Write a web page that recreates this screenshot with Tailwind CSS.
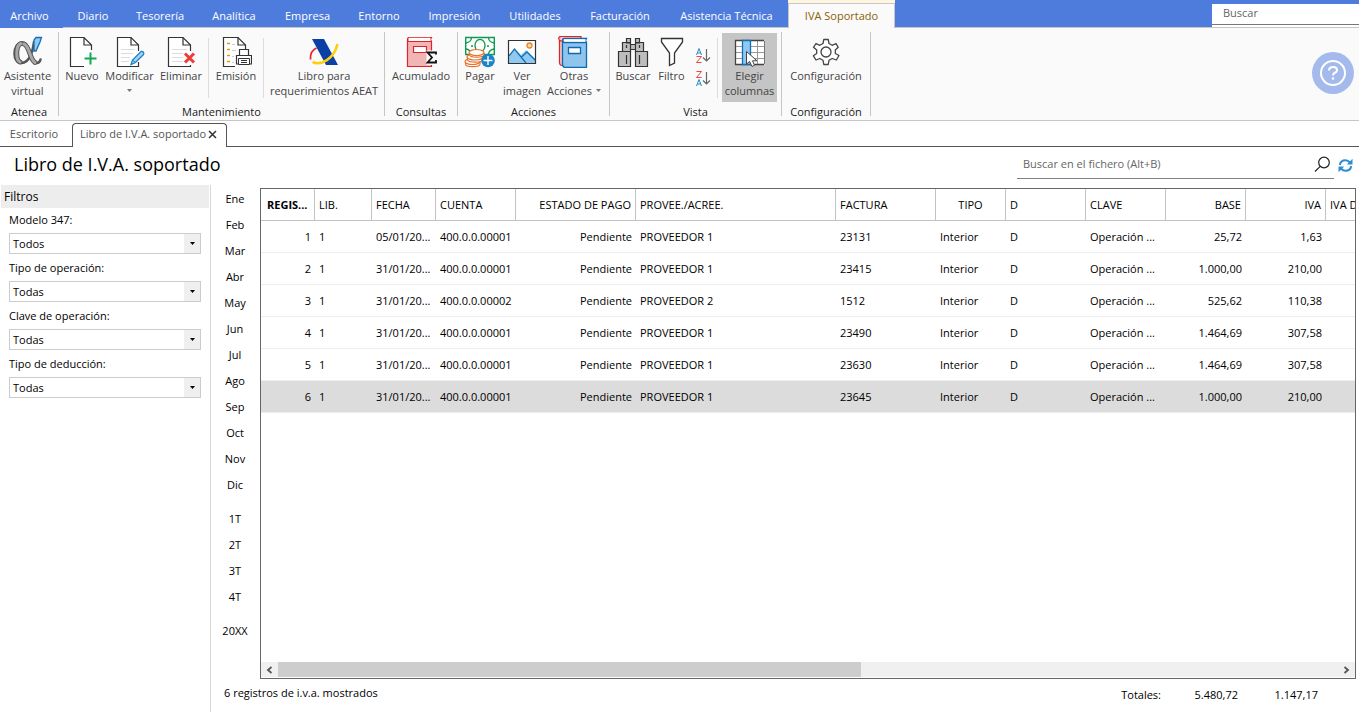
<!DOCTYPE html>
<html lang="es">
<head>
<meta charset="utf-8">
<meta name="viewport" content="width=device-width, initial-scale=1">
<title>Libro de I.V.A. soportado</title>
<script src="https://cdn.jsdelivr.net/npm/@tailwindcss/browser@4"></script>
</head>
<body class="flex h-screen min-w-[900px] flex-col overflow-hidden bg-white font-['Open_Sans','Noto_Sans',sans-serif] text-[11px] leading-4 text-black">

<!-- Menu tabs -->
<header class="flex h-7 shrink-0 items-stretch justify-between border-b border-[#c6c6c6] bg-[#4e7cdc] text-white">
  <nav class="flex [&>button]:shrink-0 [&>button]:pt-1">
    <button class="-mb-px w-[63px] bg-[#4e7cdc] pr-1">Archivo</button>
    <button class="w-[60px]">Diario</button>
    <button class="w-[74px]">Tesorería</button>
    <button class="w-[74px]">Analítica</button>
    <button class="w-[73px]">Empresa</button>
    <button class="w-[70px]">Entorno</button>
    <button class="w-[81px]">Impresión</button>
    <button class="w-[80px]">Utilidades</button>
    <button class="w-[90px]">Facturación</button>
    <button class="w-[123px]">Asistencia Técnica</button>
    <div class="-mb-px flex w-[107px] flex-col bg-[#fff6e0] pt-[3px]">
      <button class="flex-1 border-x border-t border-[#c6c6c6] bg-[#fafafa] text-[#8a6207]">IVA Soportado</button>
    </div>
  </nav>
  <div class="w-[147px] bg-[#4e7cdc] pt-1">
    <div class="h-[23px] bg-white">
      <input type="text" aria-label="Buscar" placeholder="Buscar" class="block h-[21px] w-full border-b border-[#777] bg-white px-[11px] pb-[3px] text-[11px] text-[#555] outline-none placeholder:text-[#666]">
    </div>
  </div>
</header>

<!-- Ribbon -->
<section class="flex h-[93px] shrink-0 items-start border-b border-[#c6c6c6] bg-[#fafafa] text-[#444] [&_button]:flex [&_button]:shrink-0 [&_button]:flex-col [&_button]:items-center [&_button]:whitespace-nowrap [&_button]:leading-[15px] [&_h2]:mt-[2px] [&_h2]:text-center [&_h2]:text-[#1a1a1a] [&_svg]:shrink-0">
  <div class="w-[58px] pt-[5px]">
    <button class="h-[69px] w-[55px] pt-[3px]">
      <svg width="32" height="32" viewBox="0 0 32 32" fill="none" stroke-linecap="round"><path d="M22 6C21 15 17.500 27 9.500 27C4.500 27 2.500 22.500 2.500 17.500C2.500 11.500 5.500 6.500 10.500 6.500C18.500 6.500 18 27 25 27C27 27 28 25.500 28.500 23.500" stroke="#555" stroke-width="2.500"/><path d="M8 26C3.500 24 3.500 9.500 9 7.500M12 8C17.500 10 18 24 23 26.500" stroke="#555" stroke-width="5"/><path d="M8 26C3.500 24 3.500 9.500 9 7.500M12 8C17.500 10 18 24 23 26.500" stroke="#a8a8a8" stroke-width="3"/><path d="M22 15V4L24 1.500H29.500L28 6L24 15Z" fill="#8fc9f2" stroke="#1271b5" stroke-width="1.300"/></svg>
      <span>Asistente</span><span>virtual</span>
    </button>
    <h2>Atenea</h2>
  </div>
  <div class="mt-1 h-[84px] w-px bg-[#c6c6c6]"></div>

  <div class="w-[325px] pt-[5px]">
    <div class="flex pl-[3px]">
      <button class="h-[69px] w-10 pt-[3px]">
        <svg width="32" height="32" viewBox="0 0 32 32"><path d="M4.500 1.500H18L25.500 9V18L20 30.500H4.500Z" fill="#fff"/><path d="M18 30.500H4.500V1.500H18L25.500 9V14M18 1.500V9H25.500" fill="none" stroke="#333" stroke-width="1.200"/><path d="M24.500 16.500V28.500M18.500 22.500H30.500" stroke="#0fa958" stroke-width="2"/></svg>
        <span>Nuevo</span>
      </button>
      <button class="h-[69px] w-[55px] pt-[3px]">
        <svg width="32" height="32" viewBox="0 0 32 32"><path d="M24.500 15V9L17 1.500H3.500V30.500H24.500V26" fill="#fff" stroke="#333" stroke-width="1.200"/><path d="M17 1.500V9H24.500" fill="none" stroke="#333" stroke-width="1.200"/><path d="M7 13.500H21M7 17.500H19M7 21.500H16M7 25.500H15" stroke="#ddd"/><path d="M17 28.500L18.500 24L27 15.500C29 15 30.500 17 29.500 18.500L21.500 26.500Z" fill="#a5d4f4" stroke="#1c80c7" stroke-width="1.300"/><path d="M19 24.500L21.500 26.500" stroke="#1c80c7"/></svg>
        <span>Modificar</span>
        <svg class="mt-[6px]" width="5" height="4" viewBox="0 0 5 4"><path d="M0 0H5L2.500 3Z" fill="#777"/></svg>
      </button>
      <button class="h-[69px] w-12 pt-[3px]">
        <svg width="32" height="32" viewBox="0 0 32 32"><path d="M25.500 15V9L18 1.500H3.500V30.500H25.500V29" fill="#fff" stroke="#333" stroke-width="1.200"/><path d="M18 1.500V9H25.500" fill="none" stroke="#333" stroke-width="1.200"/><path d="M7 13.500H22M7 17.500H18M7 21.500H18M7 25.500H18" stroke="#ddd"/><path d="M20 17.500L29 26.500M29 17.500L20 26.500" stroke="#ef3b36" stroke-width="3"/></svg>
        <span>Eliminar</span>
      </button>
      <div class="ml-[3px] mt-[5px] h-[60px] w-px bg-[#dcdcdc]"></div>
      <button class="ml-[3px] h-[69px] w-12 pt-[3px]">
        <svg width="32" height="32" viewBox="0 0 32 32"><path d="M15 30.500H3.500V1.500H18L25.500 9V13" fill="#fff" stroke="#333" stroke-width="1.200"/><path d="M18 1.500V9H25.500" fill="none" stroke="#333" stroke-width="1.200"/><path d="M7 7.500H10M7 13.500H10M7 19.500H10M7 25.500H10" stroke="#e8960c" stroke-width="1.500"/><path d="M12 8.500H15M12 14.500H16M12 20.500H14M12 26.500H14" stroke="#ccc"/><path d="M19.500 19V13.500H28.500V19M18.500 28H16.500V19.500H31.500V28H29.500" fill="#fff" stroke="#333" stroke-width="1.200"/><path d="M18.500 22.500H29.500V28.500H18.500ZM21 24.500H27M21 26.500H27" fill="#fff" stroke="#333"/></svg>
        <span>Emisión</span>
      </button>
      <div class="ml-[3px] mt-[5px] h-[60px] w-px bg-[#dcdcdc]"></div>
      <button class="ml-[3px] h-[69px] w-[114px] pt-[3px]">
        <svg width="32" height="32" viewBox="0 0 32 32"><path d="M4 3H16L30 29H18Z" fill="#0a3fa6"/><path d="M2.500 23.500C2 18 4 14 8.500 12" fill="none" stroke="#e8222a" stroke-width="1.800"/><path d="M4.500 26C13 30 26 23 29.500 8" fill="none" stroke="#ffd008" stroke-width="2.600"/></svg>
        <span>Libro para</span><span>requerimientos AEAT</span>
      </button>
    </div>
    <h2>Mantenimiento</h2>
  </div>
  <div class="mt-1 h-[84px] w-px bg-[#c6c6c6]"></div>

  <div class="w-[72px] pt-[5px]">
    <button class="h-[69px] w-full pt-[3px]">
      <svg width="32" height="32" viewBox="0 0 32 32"><path d="M2.500 4V30.500H26.500V5.500H4Q2.500 5.500 2.500 3.500Q2.500 1.500 4 1.500H26.500L25.500 3.500L26.500 5.500" fill="#f2b5b5" stroke="#e32129" stroke-width="1.200"/><path d="M4 1.800H25.500V5H4Z" fill="#fff"/><path d="M8.500 10.500H21.500V16.500H8.500Z" fill="#fff" stroke="#e32129" stroke-width="1.200"/><path d="M21.500 14.500H32V29H21.500Z" fill="#fafafa"/><path d="M31 18.500V16.500H22.500L27 21.500L22.500 26.500H31V24" fill="none" stroke="#111" stroke-width="1.800"/></svg>
      <span>Acumulado</span>
    </button>
    <h2>Consultas</h2>
  </div>
  <div class="mt-1 h-[84px] w-px bg-[#c6c6c6]"></div>

  <div class="w-[151px] pt-[5px]">
    <div class="flex pl-px">
      <button class="h-[69px] w-[42px] pt-[3px]">
        <svg width="32" height="32" viewBox="0 0 32 32"><path d="M1.700 1.500H30.300V18.500H1.700Z" fill="#fff" stroke="#0d9a50" stroke-width="1.400"/><path d="M2 7Q7 6 7.500 2M30 7Q25 6 24.500 2M30 13Q25 14 24.500 18M2 13Q4 13 6 15" fill="none" stroke="#0d9a50" stroke-width="1.300"/><ellipse cx="16" cy="9.500" rx="5" ry="6.200" fill="#fff" stroke="#0d9a50" stroke-width="1.300"/><circle cx="8" cy="10" r="1" fill="#0d9a50"/><circle cx="24" cy="10" r="1" fill="#0d9a50"/><g fill="#fff" stroke="#e8742c" stroke-width="1.200"><path d="M1.500 26V28C1.500 31.500 16 31.500 16 28V26"/><ellipse cx="8.500" cy="25.500" rx="7.500" ry="3"/><path d="M3.500 21.500V23.500C3.500 27 19 27 19 23.500V21.500"/><ellipse cx="11" cy="21" rx="8" ry="3"/><path d="M5.500 16.500V18.500C5.500 22 20 22 20 18.500V16.500"/><ellipse cx="12.500" cy="16.500" rx="7.500" ry="3"/></g><circle cx="24" cy="24.500" r="6.800" fill="#1b83c9"/><path d="M24 20V29M19.500 24.500H28.500" stroke="#fff" stroke-width="1.400"/></svg>
        <span>Pagar</span>
      </button>
      <button class="h-[69px] w-[42px] pt-[3px]">
        <svg width="32" height="32" viewBox="0 0 32 32"><path d="M2.500 4.500H29.500V27.500H2.500Z" fill="#fff"/><path d="M3 21L9 13L15 19L20 14L29 22.500V27H3Z" fill="#8fc9f2"/><path d="M3 20L8.500 13L20 27M15.500 21L21 16L29 24" fill="none" stroke="#1271b5" stroke-width="1.300"/><circle cx="23.500" cy="9.500" r="2.500" fill="#f8d9a2" stroke="#e8842c" stroke-width="1.300"/><path d="M2.500 4.500H29.500V27.500H2.500Z" fill="none" stroke="#333" stroke-width="1.200"/></svg>
        <span>Ver</span><span>imagen</span>
      </button>
      <button class="h-[69px] w-[62px] pt-[3px]">
        <svg width="32" height="32" viewBox="0 0 32 32"><path d="M1.500 4V26Q1.500 29.500 4 29.500H7V6H23V.500H3Q.700 .500 .700 2.500Q.700 4.500 3 5H7" fill="#f6c2c2" stroke="#e32129" stroke-width="1.200"/><path d="M4.500 4.500V28Q4.500 31.300 7 31.300H28.500V6.500H6.500Q4.500 6.500 4.500 4.500Q4.500 2.500 6.500 2.500H28.500L27.500 4.500L28.500 6.500" fill="#8fc5ec" stroke="#0f69b0" stroke-width="1.300"/><path d="M6 3.200H27.500V5.800H6Z" fill="#fff"/><path d="M10.500 11.500H22.500V17.500H10.500Z" fill="#fff" stroke="#0f69b0" stroke-width="1.300"/></svg>
        <span>Otras</span>
        <span class="flex items-center gap-1">Acciones<svg width="5" height="4" viewBox="0 0 5 4"><path d="M0 0H5L2.500 3Z" fill="#777"/></svg></span>
      </button>
    </div>
    <h2>Acciones</h2>
  </div>
  <div class="mt-1 h-[84px] w-px bg-[#c6c6c6]"></div>

  <div class="w-[171px] pt-[5px]">
    <div class="flex pl-[2px]">
      <button class="h-[69px] w-[42px] pt-[3px]">
        <svg width="32" height="32" viewBox="0 0 32 32"><g fill="#bdbdbd" stroke="#333" stroke-width="1.200"><path d="M9.500 2.500H13.500V7H9.500ZM18.500 2.500H22.500V7H18.500ZM5.500 6.500H13.500V15.500H5.500ZM18.500 6.500H26.500V15.500H18.500ZM13.500 8.500H18.500V13.500H13.500Z"/><path d="M1.500 15.500H13.500V30.500H1.500ZM18.500 15.500H30.500V30.500H18.500Z"/><path d="M9.500 19V28M22.500 19V28M9.500 9V12M22.500 9V12"/></g></svg>
        <span>Buscar</span>
      </button>
      <button class="h-[69px] w-[35px] pt-[3px]">
        <svg width="32" height="32" viewBox="0 0 32 32"><path d="M5.500 2.500H26.500V6L18.500 17V27L13.500 29.500V17L5.500 6Z" fill="#fff" stroke="#333" stroke-width="1.300"/></svg>
        <span>Filtro</span>
      </button>
      <div class="flex w-[28px] flex-col items-center gap-[6px] pt-[14px]">
        <button aria-label="Orden ascendente"><svg width="16" height="17" viewBox="0 0 16 17" fill="none"><path d="M1.500 8L4 1.500L6.500 8M2.500 6H5.500" stroke="#258acb"/><path d="M1.500 9.500H6.500L1.500 15.500H6.500" stroke="#ed4545"/><path d="M11.500 2V14M8 10.500L11.500 14L15 10.500" stroke="#666" stroke-width="1.200"/></svg></button>
        <button aria-label="Orden descendente"><svg width="16" height="17" viewBox="0 0 16 17" fill="none"><path d="M1.500 1.500H6.500L1.500 7.500H6.500" stroke="#ed4545"/><path d="M1.500 16L4 9.500L6.500 16M2.500 14H5.500" stroke="#258acb"/><path d="M11.500 2V14M8 10.500L11.500 14L15 10.500" stroke="#666" stroke-width="1.200"/></svg></button>
      </div>
      <div class="mt-[5px] h-[60px] w-px bg-[#dcdcdc]"></div>
      <button aria-pressed="true" class="ml-1 h-[69px] w-[55px] bg-[#c5c5c5] pt-[3px]">
        <svg width="32" height="32" viewBox="0 0 32 32"><path d="M1.500 4.500H30.500V28.500H1.500Z" fill="#fff"/><path d="M1.500 10.500H30.500M1.500 16.500H30.500M1.500 22.500H30.500M16.500 5V28M23.500 5V28" stroke="#999"/><path d="M30.500 5V28" stroke="#777"/><path d="M30 4.500H1.500V28.500H30" fill="none" stroke="#444" stroke-width="1.300"/><path d="M8.500 4.500H16.500V28.500H8.500Z" fill="#8fc9f2" stroke="#1271b5" stroke-width="1.300"/><path d="M12.500 15.500V28L15.500 25.500L18 30.500L20.500 29.200L18.500 24.800H23Z" fill="#fff" stroke="#444"/></svg>
        <span>Elegir</span><span>columnas</span>
      </button>
    </div>
    <h2>Vista</h2>
  </div>
  <div class="mt-1 h-[84px] w-px bg-[#c6c6c6]"></div>

  <div class="w-[88px] pt-[5px]">
    <button class="h-[69px] w-full pt-[3px]">
      <svg width="32" height="32" viewBox="0 0 32 32"><path d="M13 7.500L13.800 3.500H18.200L19 7.500L22.200 9.300L26 7.500L28.200 11.300L25.300 14L25.300 17.500L29 19.500L26.300 24L22.200 22.500L19 24.300L18.200 28.500H13.800L13 24.300L9.800 22.500L6 24L3.400 19.800L6.700 17.500V14L3.500 11.300L6 7.500L9.800 9.300Z" fill="#fff" stroke="#444" stroke-width="1.300" stroke-linejoin="round"/><circle cx="16" cy="16" r="5" fill="#fff" stroke="#444" stroke-width="1.300"/></svg>
      <span>Configuración</span>
    </button>
    <h2>Configuración</h2>
  </div>
  <div class="mt-1 h-[84px] w-px bg-[#c6c6c6]"></div>

  <button aria-label="Ayuda" class="ml-auto mr-[5px] mt-6">
    <svg width="42" height="42" viewBox="0 0 42 42"><circle cx="21" cy="21" r="21" fill="#a4baec"/><circle cx="21" cy="21" r="12" fill="none" stroke="#fff" stroke-width="2"/><path d="M17 18.500Q17 15 21 15Q25 15 25 18Q25 20 22.500 21Q21 21.800 21 23.500" fill="none" stroke="#fff" stroke-width="2"/><circle cx="21" cy="26.500" r="1.300" fill="#fff"/></svg>
  </button>
</section>

<!-- Document tabs -->
<nav class="flex h-[26px] shrink-0 items-stretch text-[#555]">
  <button class="w-[72px] border-b border-[#555] pr-1">Escritorio</button>
  <div class="mt-[2px] flex w-[155px] shrink-0 items-center justify-between rounded-t-[4px] border-x border-t border-[#555] pb-[3px] pl-[7px] pr-[9px] whitespace-nowrap">
    <button>Libro de I.V.A. soportado</button>
    <button aria-label="Cerrar"><svg width="9" height="9" viewBox="0 0 9 9"><path d="M1 1L8 8M8 1L1 8" stroke="#333" stroke-width="1.500"/></svg></button>
  </div>
  <div class="flex-1 border-b border-[#555]"></div>
</nav>

<!-- Title and file search -->
<div class="flex h-[38px] shrink-0 items-start justify-between pl-[14px] pr-[6px]">
  <h1 class="pt-[5px] text-[18px] leading-6">Libro de I.V.A. soportado</h1>
  <div class="flex items-center gap-[4px]">
    <div class="flex h-8 w-[317px] items-center border-b border-[#808080] pl-[6px] pr-[3px]">
      <input type="text" aria-label="Buscar en el fichero" placeholder="Buscar en el fichero (Alt+B)" class="min-w-0 flex-1 pt-[3px] text-[11px] outline-none placeholder:text-[#666]">
      <button aria-label="Buscar" class="pt-[3px]"><svg width="17" height="17" viewBox="0 0 17 17"><circle cx="10" cy="6.500" r="5.300" fill="none" stroke="#222" stroke-width="1.200"/><path d="M6.200 10.300L1 15.500" stroke="#222" stroke-width="1.200"/></svg></button>
    </div>
    <button aria-label="Actualizar" class="pt-1"><svg width="15" height="15" viewBox="0 0 15 15"><path d="M1.800 7Q2.500 2.200 7.500 2.200Q10 2.200 12 4.500M13.200 8Q12.500 12.800 7.500 12.800Q5 12.800 3 10.500" fill="none" stroke="#2e8dcf" stroke-width="2"/><path d="M14.500 .800V6.500H8.800ZM.500 14.200V8.500H6.200Z" fill="#2e8dcf"/></svg></button>
  </div>
</div>

<main class="flex min-h-0 flex-1">
  <!-- Filters -->
  <aside class="w-[211px] shrink-0 border-r border-[#d8d8d8] pl-px pr-px">
    <h2 class="h-[23px] bg-[#ededed] pl-[3px] text-[12px] leading-6">Filtros</h2>
    <form class="flex flex-col gap-[6px] py-1 pl-2 pr-2 [&_label]:mb-[5px] [&_label]:block [&_select]:h-[21px] [&_select]:w-full [&_select]:appearance-none [&_select]:border [&_select]:border-[#ccc] [&_select]:bg-white [&_select]:px-[3px] [&_select]:text-[11px] [&_span]:pointer-events-none [&_span]:absolute [&_span]:inset-y-px [&_span]:right-px [&_span]:flex [&_span]:w-4 [&_span]:items-center [&_span]:justify-center [&_span]:bg-[#efefef]">
      <div><label for="f1">Modelo 347:</label><div class="relative"><select id="f1"><option>Todos</option></select><span><svg width="5" height="3" viewBox="0 0 5 3"><path d="M0 0H5L2.500 3Z"/></svg></span></div></div>
      <div><label for="f2">Tipo de operación:</label><div class="relative"><select id="f2"><option>Todas</option></select><span><svg width="5" height="3" viewBox="0 0 5 3"><path d="M0 0H5L2.500 3Z"/></svg></span></div></div>
      <div><label for="f3">Clave de operación:</label><div class="relative"><select id="f3"><option>Todas</option></select><span><svg width="5" height="3" viewBox="0 0 5 3"><path d="M0 0H5L2.500 3Z"/></svg></span></div></div>
      <div><label for="f4">Tipo de deducción:</label><div class="relative"><select id="f4"><option>Todas</option></select><span><svg width="5" height="3" viewBox="0 0 5 3"><path d="M0 0H5L2.500 3Z"/></svg></span></div></div>
    </form>
  </aside>

  <div class="flex min-w-0 flex-1 flex-col pr-[3px] pt-[3px]">
    <div class="flex min-h-0 flex-1">
      <!-- Periods -->
      <nav class="-mt-[2px] flex w-[49px] shrink-0 flex-col pr-px [&>button]:h-[26px]">
        <button>Ene</button><button>Feb</button><button>Mar</button><button>Abr</button><button>May</button><button>Jun</button><button>Jul</button><button>Ago</button><button>Sep</button><button>Oct</button><button>Nov</button><button>Dic</button>
        <button class="mt-2">1T</button><button>2T</button><button>3T</button><button>4T</button>
        <button class="mt-2">20XX</button>
      </nav>
      <!-- Records -->
      <div class="flex min-w-0 flex-1 flex-col border border-[#666]">
        <div class="min-h-0 flex-1 overflow-hidden">
          <table class="w-[1145px] min-w-full table-fixed border-separate border-spacing-0 [&_td]:h-8 [&_td]:overflow-hidden [&_td]:border-b [&_td]:border-[#eee] [&_td]:px-1 [&_td]:text-ellipsis [&_td]:whitespace-nowrap [&_th]:h-8 [&_th]:overflow-hidden [&_th]:border-r [&_th]:border-b [&_th]:border-[#c3c3c3] [&_th]:px-1 [&_th]:text-left [&_th]:font-normal [&_th]:text-ellipsis [&_th]:whitespace-nowrap">
            <colgroup><col class="w-[54px]"><col class="w-[57px]"><col class="w-[64px]"><col class="w-[80px]"><col class="w-[120px]"><col class="w-[200px]"><col class="w-[100px]"><col class="w-[70px]"><col class="w-[80px]"><col class="w-[80px]"><col class="w-[80px]"><col class="w-[80px]"><col></colgroup>
            <thead>
              <tr><th class="pl-[6px]!"><b>REGIS...</b></th><th>LIB.</th><th>FECHA</th><th>CUENTA</th><th class="text-right!">ESTADO DE PAGO</th><th>PROVEE./ACREE.</th><th>FACTURA</th><th class="text-center!">TIPO</th><th>D</th><th>CLAVE</th><th class="text-right!">BASE</th><th class="text-right!">IVA</th><th>IVA DED.</th></tr>
            </thead>
            <tbody>
              <tr><td class="text-right">1</td><td>1</td><td>05/01/20...</td><td>400.0.0.00001</td><td class="text-right">Pendiente</td><td>PROVEEDOR 1</td><td>23131</td><td>Interior</td><td>D</td><td>Operación ...</td><td class="text-right">25,72</td><td class="text-right">1,63</td><td></td></tr>
              <tr><td class="text-right">2</td><td>1</td><td>31/01/20...</td><td>400.0.0.00001</td><td class="text-right">Pendiente</td><td>PROVEEDOR 1</td><td>23415</td><td>Interior</td><td>D</td><td>Operación ...</td><td class="text-right">1.000,00</td><td class="text-right">210,00</td><td></td></tr>
              <tr><td class="text-right">3</td><td>1</td><td>31/01/20...</td><td>400.0.0.00002</td><td class="text-right">Pendiente</td><td>PROVEEDOR 2</td><td>1512</td><td>Interior</td><td>D</td><td>Operación ...</td><td class="text-right">525,62</td><td class="text-right">110,38</td><td></td></tr>
              <tr><td class="text-right">4</td><td>1</td><td>31/01/20...</td><td>400.0.0.00001</td><td class="text-right">Pendiente</td><td>PROVEEDOR 1</td><td>23490</td><td>Interior</td><td>D</td><td>Operación ...</td><td class="text-right">1.464,69</td><td class="text-right">307,58</td><td></td></tr>
              <tr><td class="text-right">5</td><td>1</td><td>31/01/20...</td><td>400.0.0.00001</td><td class="text-right">Pendiente</td><td>PROVEEDOR 1</td><td>23630</td><td>Interior</td><td>D</td><td>Operación ...</td><td class="text-right">1.464,69</td><td class="text-right">307,58</td><td></td></tr>
              <tr class="bg-[#dcdcdc]"><td class="text-right">6</td><td>1</td><td>31/01/20...</td><td>400.0.0.00001</td><td class="text-right">Pendiente</td><td>PROVEEDOR 1</td><td>23645</td><td>Interior</td><td>D</td><td>Operación ...</td><td class="text-right">1.000,00</td><td class="text-right">210,00</td><td></td></tr>
            </tbody>
          </table>
        </div>
        <div class="mb-px flex h-[15px] shrink-0 bg-[#f0f0f0] [&>button]:flex [&>button]:w-[17px] [&>button]:items-center [&>button]:justify-center">
          <button aria-label="Desplazar a la izquierda"><svg width="7" height="8" viewBox="0 0 7 8"><path d="M5.500 1L2 4L5.500 7" fill="none" stroke="#555" stroke-width="1.800"/></svg></button>
          <div class="flex-1"><div class="h-full w-[55%] bg-[#cdcdcd]"></div></div>
          <button aria-label="Desplazar a la derecha"><svg width="7" height="8" viewBox="0 0 7 8"><path d="M1.500 1L5 4L1.500 7" fill="none" stroke="#555" stroke-width="1.800"/></svg></button>
        </div>
      </div>
    </div>
    <!-- Totals -->
    <footer class="flex h-[33px] shrink-0 justify-between pl-[13px] pr-[38px]">
      <p class="pt-[6px]">6 registros de i.v.a. mostrados</p>
      <div class="flex pt-2 text-right"><span>Totales:</span><span class="w-[77px]">5.480,72</span><span class="w-20">1.147,17</span></div>
    </footer>
  </div>
</main>
</body>
</html>
